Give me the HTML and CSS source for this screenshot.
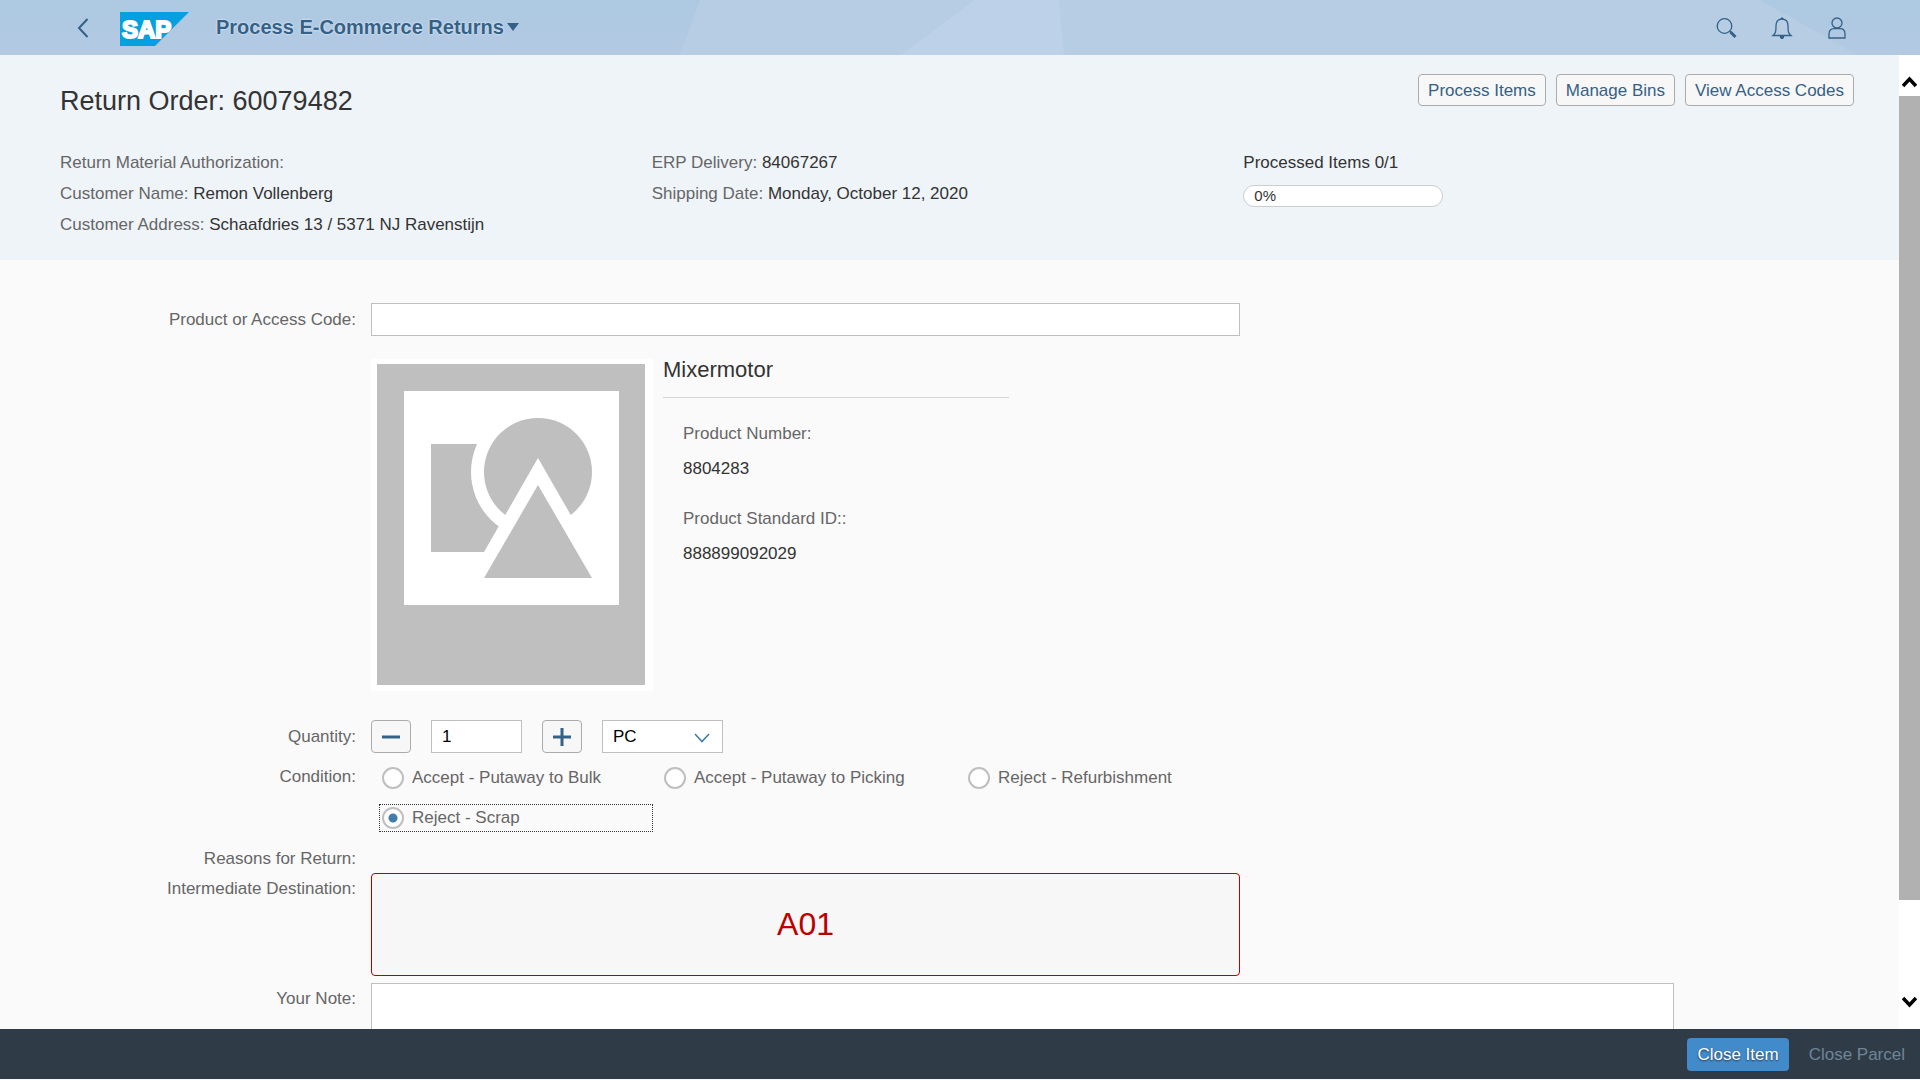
FILE: index.html
```html
<!DOCTYPE html>
<html lang="en">
<head>
<meta charset="utf-8">
<title>Process E-Commerce Returns</title>
<link rel="stylesheet" href="styles.css">
</head>
<body>
<div class="app">
  <header class="shell">
    <svg class="shell-bg" viewBox="0 0 1920 55" preserveAspectRatio="none" aria-hidden="true">
      <path d="M700 0H1760L1857 55H680Z" fill="#b7cde4"/>
      <path d="M975 0H1059L1064 55H901Z" fill="#bdd2e8"/>
    </svg>
    <button class="shell-btn back" aria-label="Back">
      <svg width="12" height="20" viewBox="0 0 12 20"><path d="M10.500 1L2 10L10.500 19" fill="none" stroke="#346187" stroke-width="2"/></svg>
    </button>
    <svg class="logo" width="69" height="34" viewBox="0 0 69 34" role="img" aria-label="SAP">
      <path d="M0 0H69L35 34H0Z" fill="#069fdf"/>
      <text class="logo-text" x="2" y="26">SAP</text>
    </svg>
    <button class="shell-title">Process E-Commerce Returns
      <svg width="12" height="8" viewBox="0 0 12 8"><path d="M0 0H12L6 8Z" fill="#346187"/></svg>
    </button>
    <nav class="shell-actions">
      <button class="shell-btn" aria-label="Search"><svg width="22" height="24" viewBox="0 0 22 24" fill="none" stroke="#346187"><circle cx="8.500" cy="10" r="7.300" stroke-width="1.300"/><path d="M13.500 15L15 16.500" stroke-width="1.500"/><path d="M14.500 16L19.500 21" stroke-width="3"/></svg></button>
      <button class="shell-btn" aria-label="Notifications"><svg width="22" height="24" viewBox="0 0 22 24" fill="none" stroke="#346187" stroke-width="1.300"><path d="M2 19.500C4.500 17.500 5 16 5 10C5 5.500 7.500 3.200 11 3.200S17 5.500 17 10C17 16 17.500 17.500 20 19.500Z"/><path d="M9 20.500H13L12 22.500H10ZM10 2H12V3H10Z" fill="#346187" stroke-width="1"/></svg></button>
      <button class="shell-btn" aria-label="User"><svg width="22" height="24" viewBox="0 0 22 24" fill="none" stroke="#346187" stroke-width="1.300"><circle cx="11" cy="7" r="5"/><path d="M3 22V18C3 14.500 5 12.700 8 12.700H14C17 12.700 19 14.500 19 18V22Z"/></svg></button>
    </nav>
  </header>

  <div class="viewport">
    <main class="content">
      <section class="object-header">
        <div class="title-row">
          <h1>Return Order: 60079482</h1>
          <div class="actions">
            <button class="btn">Process Items</button>
            <button class="btn">Manage Bins</button>
            <button class="btn">View Access Codes</button>
          </div>
        </div>
        <div class="facts">
          <div>
            <p><span>Return Material Authorization:</span></p>
            <p><span>Customer Name:</span> Remon Vollenberg</p>
            <p><span>Customer Address:</span> Schaafdries 13 / 5371 NJ Ravenstijn</p>
          </div>
          <div>
            <p><span>ERP Delivery:</span> 84067267</p>
            <p><span>Shipping Date:</span> Monday, October 12, 2020</p>
          </div>
          <div>
            <p>Processed Items 0/1</p>
            <div class="progress" role="progressbar" aria-valuenow="0" aria-valuemin="0" aria-valuemax="100">0%</div>
          </div>
        </div>
      </section>

      <form class="form">
        <div class="row code-row">
          <label class="label" for="code">Product or Access Code:</label>
          <input class="field" id="code" type="text">
        </div>

        <div class="row product-row">
          <div class="product">
            <svg class="product-image" width="282" height="332" viewBox="0 0 282 332" role="img" aria-label="No product image">
              <path d="M0 0H282V332H0Z" fill="#fff"/>
              <path d="M6 5H274V326H6Z" fill="#bfbfbf"/>
              <path d="M33 32H248V246H33Z" fill="#fff"/>
              <path d="M60 85H150V193H60Z" fill="#bfbfbf"/>
              <circle cx="167" cy="113" r="67" fill="#fff"/>
              <circle cx="167" cy="113" r="54" fill="#bfbfbf"/>
              <path d="M167 99L244 233H90Z" fill="#fff"/>
              <path d="M167 126L221 219H113Z" fill="#bfbfbf"/>
            </svg>
            <div class="product-info">
              <h2>Mixermotor</h2>
              <dl>
                <dt>Product Number:</dt><dd>8804283</dd>
                <dt>Product Standard ID::</dt><dd>888899092029</dd>
              </dl>
            </div>
          </div>
        </div>

        <div class="row quantity-row">
          <label class="label" for="qty">Quantity:</label>
          <div class="stepper">
            <button type="button" class="btn icon-btn" aria-label="Decrease"><svg width="18" height="18" viewBox="0 0 18 18"><path d="M0 9H18" stroke="#346187" stroke-width="3"/></svg></button>
            <input class="field qty" id="qty" type="text" value="1">
            <button type="button" class="btn icon-btn" aria-label="Increase"><svg width="18" height="18" viewBox="0 0 18 18"><path d="M0 9H18M9 0V18" stroke="#346187" stroke-width="3"/></svg></button>
            <div class="select-wrap">
              <select class="field" aria-label="Unit"><option>PC</option></select>
              <svg class="select-arrow" width="16" height="10" viewBox="0 0 16 10"><path d="M1 1L8 8.500L15 1" fill="none" stroke="#427cac" stroke-width="1.600"/></svg>
            </div>
          </div>
        </div>

        <div class="row condition-row">
          <span class="label" id="condition">Condition:</span>
          <div class="radios" role="radiogroup" aria-labelledby="condition">
            <label class="radio"><input type="radio" name="condition">Accept - Putaway to Bulk</label>
            <label class="radio"><input type="radio" name="condition">Accept - Putaway to Picking</label>
            <label class="radio"><input type="radio" name="condition">Reject - Refurbishment</label>
            <label class="radio focused"><input type="radio" name="condition" checked>Reject - Scrap</label>
          </div>
        </div>

        <div class="row reasons-row"><span class="label">Reasons for Return:</span></div>

        <div class="row destination-row">
          <span class="label">Intermediate Destination:</span>
          <output class="destination">A01</output>
        </div>

        <div class="row note-row">
          <label class="label" for="note">Your Note:</label>
          <textarea class="field note" id="note"></textarea>
        </div>
      </form>
    </main>

    <div class="scrollbar" aria-hidden="true">
      <svg class="scroll-arrow up" width="15" height="12" viewBox="0 0 15 12"><path d="M1 10L7.500 3L14 10" fill="none" stroke="#000" stroke-width="3.500"/></svg>
      <div class="thumb"></div>
      <svg class="scroll-arrow down" width="15" height="12" viewBox="0 0 15 12"><path d="M1 2L7.500 9L14 2" fill="none" stroke="#000" stroke-width="3.500"/></svg>
    </div>
  </div>

  <footer class="footer">
    <button class="footer-btn primary">Close Item</button>
    <button class="footer-btn" disabled>Close Parcel</button>
  </footer>
</div>
</body>
</html>
```

FILE: styles.css
```css
* { box-sizing: border-box; }

body {
  margin: 0;
  font-family: "Liberation Sans", Arial, sans-serif;
  font-size: 17px;
  line-height: 20px;
  color: #333;
  background: #f5f7fa;
}

button, input, select, textarea { font: inherit; color: inherit; }
h1, h2, p, dl, dd { margin: 0; font-weight: normal; }

.app { display: flex; flex-direction: column; height: 100vh; padding-bottom: 1px; }

/* Shell bar */
.shell {
  position: relative;
  flex: none;
  display: flex;
  align-items: center;
  height: 55px;
  padding: 0 56px 0 55px;
  background: linear-gradient(#adc9e2, #b3c9e2);
}
.shell > * { position: relative; }
.shell > .shell-bg { position: absolute; inset: 0; width: 100%; height: 100%; }
.shell-btn {
  display: flex;
  align-items: center;
  justify-content: center;
  width: 55px;
  height: 55px;
  padding: 0;
  border: 0;
  background: none;
}
.logo { margin: 2px 0 0 10px; }
.logo-text { font-size: 24px; font-weight: bold; fill: #fff; stroke: #fff; stroke-width: 2px; }
.shell-title {
  display: flex;
  align-items: center;
  gap: 3px;
  margin-left: 27px;
  padding: 0 0 2px;
  border: 0;
  background: none;
  font-size: 20px;
  font-weight: bold;
  color: #346187;
  text-shadow: 0 0 2px #fff;
}
.shell-actions { display: flex; margin-left: auto; }

/* Scrolling area */
.viewport { flex: 1; display: flex; min-height: 0; }
.content { flex: 1; overflow: hidden; background: #fafafa; }
.scrollbar {
  flex: none;
  display: flex;
  flex-direction: column;
  align-items: center;
  width: 21px;
  background: #fff;
}
.scroll-arrow { flex: none; }
.up { margin: 21px 0 8px; }
.thumb { flex: 804; width: 100%; background: #b1b1b1; }
.down { margin: 96px 0 21px; }

/* Object header */
.object-header { padding: 19px 45px 20px 60px; background: #eff4f9; }
.title-row { display: flex; justify-content: space-between; align-items: flex-start; }
h1 { padding-top: 11px; font-size: 27px; line-height: 32px; }
.actions { display: flex; gap: 10px; }
.btn {
  height: 32px;
  padding: 1px 9px 0;
  border: 1px solid #ababab;
  border-radius: 4px;
  background: #f7f7f7;
  color: #346187;
}
.facts {
  display: grid;
  grid-template-columns: repeat(3, 1fr);
  margin: 30px 19px 0 0;
  line-height: 31px;
}
.facts span { color: #666; }
.progress {
  width: 200px;
  height: 22px;
  margin-top: 7px;
  padding-left: 10px;
  border: 1px solid #ccc;
  border-radius: 11px;
  background: #fff;
  font-size: 15px;
  line-height: 20px;
}

/* Form */
.form { padding: 43px 225px 0 0; }
.row {
  display: grid;
  grid-template-columns: 356px 1fr;
  column-gap: 15px;
  align-items: start;
}
.label { text-align: right; color: #666; }
.field {
  height: 33px;
  padding: 0 10px;
  border: 1px solid #bfbfbf;
  border-radius: 0;
  background: #fff;
  color: #000;
}
.code-row { align-items: center; }
.code-row .field { width: 869px; }

.product-row { margin-top: 23px; }
.product { grid-column: 2; display: flex; gap: 10px; }
.product-info { width: 346px; }
h2 { padding-bottom: 16px; border-bottom: 1px solid #d5d5d5; font-size: 22px; line-height: 22px; }
dl { padding: 20px; }
dt { color: #666; line-height: 32px; }
dd { line-height: 38px; margin-bottom: 15px; }

.quantity-row { margin-top: 29px; align-items: center; }
.stepper { display: flex; gap: 20px; }
.icon-btn { display: flex; align-items: center; justify-content: center; width: 40px; height: 33px; padding: 0; }
.qty { width: 91px; }
.select-wrap { position: relative; display: flex; width: 121px; }
.select-wrap select { width: 100%; appearance: none; }
.select-arrow { position: absolute; right: 13px; top: 13px; pointer-events: none; }

.condition-row { padding-top: 11px; }
.condition-row > .label { line-height: 26px; }
.radios { display: grid; grid-template-columns: 282px 304px 283px; row-gap: 12px; }
.radio {
  display: flex;
  align-items: center;
  gap: 8px;
  height: 28px;
  margin-left: 8px;
  padding-left: 2px;
  border: 1px solid transparent;
  color: #666;
}
.focused { border: 1px dotted #333; }
.radio input {
  appearance: none;
  width: 22px;
  height: 22px;
  margin: 0;
  border: 2px solid #bfbfbf;
  border-radius: 50%;
  background: #fff;
}
.radio input:checked { background: radial-gradient(circle, #427cac 4px, #fff 5px); }

.reasons-row { margin-top: 17px; }
.destination-row { margin-top: 4px; }
.destination-row > .label { padding-top: 6px; }
.destination {
  display: flex;
  align-items: center;
  justify-content: center;
  width: 869px;
  height: 103px;
  padding-bottom: 2px;
  border: 1px solid #b00;
  border-radius: 4px;
  background: #f7f7f7;
  color: #b00;
  font-size: 32px;
}
.note-row { margin-top: 7px; }
.note-row > .label { padding-top: 6px; }
.note { width: 100%; height: 120px; resize: none; }

/* Footer toolbar */
.footer {
  flex: none;
  display: flex;
  align-items: center;
  justify-content: flex-end;
  gap: 10px;
  height: 50px;
  padding: 1px 5px 0 0;
  background: #2f3c48;
}
.footer-btn {
  height: 33px;
  padding: 1px 10px 0;
  border: 0;
  border-radius: 4px;
  background: none;
  color: #6f8496;
}
.primary { background: #428bca; color: #fff; text-shadow: 0 1px 2px #234; }
```
